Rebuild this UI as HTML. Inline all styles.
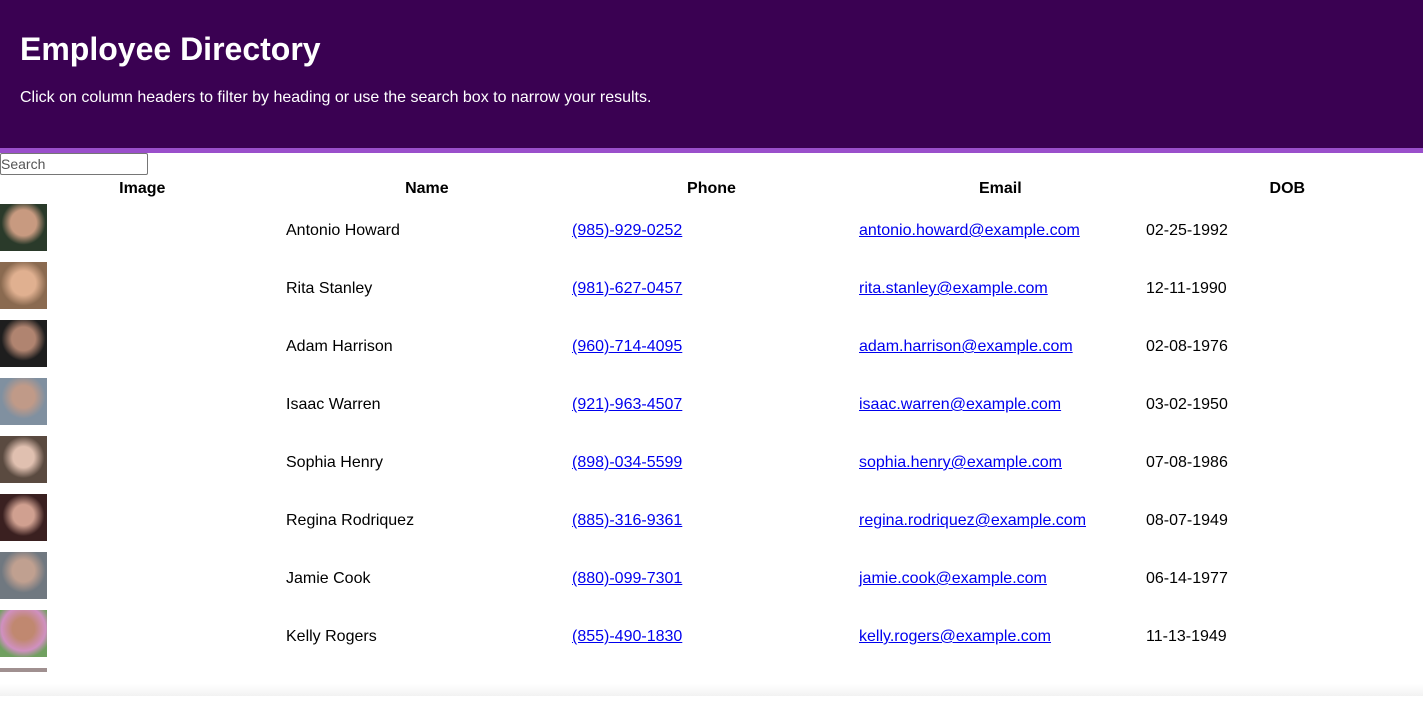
<!DOCTYPE html>
<html><head><meta charset="utf-8"><style>
body{margin:0;font-family:"Liberation Sans",Arial,sans-serif;width:1423px;height:696px;overflow:hidden;position:relative;background:#fff}
.hdr{background:#3a0152;height:148px;border-bottom:5px solid #9a4fcb;color:#fff;box-sizing:content-box}
.hdr h1{margin:0;position:absolute;left:20px;top:31px;font-size:32px;font-weight:bold}
.hdr p{margin:0;position:absolute;left:20px;top:89px;font-size:16px}
input{position:absolute;left:0;top:153px;width:148px;height:22px;box-sizing:border-box;border:1px solid #767676;border-radius:2px;font-size:14px;padding:0;font-family:inherit}
input::placeholder{color:#555}
.th{position:absolute;top:180px;font-weight:bold;font-size:16px;width:284.6px;text-align:center}
.row{position:absolute;left:0;width:1423px;height:58px}
.img{position:absolute;left:0;top:0;width:47px;height:47px}
.c{position:absolute;top:18px;font-size:16px;color:#000}
a.c{color:#0000ee;text-decoration:underline}
.fade{position:absolute;left:0;right:0;top:672px;height:24px;background:linear-gradient(#fff,#fff 12px,#f2f2f2)}
</style></head><body>
<div class="hdr"><h1>Employee Directory</h1><p>Click on column headers to filter by heading or use the search box to narrow your results.</p></div>
<input placeholder="Search">
<div class="th" style="left:0">Image</div>
<div class="th" style="left:284.6px">Name</div>
<div class="th" style="left:569.2px">Phone</div>
<div class="th" style="left:858px">Email</div>
<div class="th" style="left:1145px">DOB</div>

<div class="row" style="top:204px"><div class="img" style="background:radial-gradient(circle at 50% 40%,#c89a80 0 35%,#2a3a2a 60%)"></div><span class="c" style="left:286px">Antonio Howard</span><a href="#" class="c" style="left:572px">(985)-929-0252</a><a href="#" class="c" style="left:859px">antonio.howard@example.com</a><span class="c" style="left:1146px">02-25-1992</span></div>
<div class="row" style="top:262px"><div class="img" style="background:radial-gradient(circle at 50% 45%,#e0b090 0 35%,#8a6a50 65%)"></div><span class="c" style="left:286px">Rita Stanley</span><a href="#" class="c" style="left:572px">(981)-627-0457</a><a href="#" class="c" style="left:859px">rita.stanley@example.com</a><span class="c" style="left:1146px">12-11-1990</span></div>
<div class="row" style="top:320px"><div class="img" style="background:radial-gradient(circle at 50% 40%,#b08470 0 32%,#1e1e1e 60%)"></div><span class="c" style="left:286px">Adam Harrison</span><a href="#" class="c" style="left:572px">(960)-714-4095</a><a href="#" class="c" style="left:859px">adam.harrison@example.com</a><span class="c" style="left:1146px">02-08-1976</span></div>
<div class="row" style="top:378px"><div class="img" style="background:radial-gradient(circle at 50% 40%,#c09a88 0 30%,#8090a0 60%)"></div><span class="c" style="left:286px">Isaac Warren</span><a href="#" class="c" style="left:572px">(921)-963-4507</a><a href="#" class="c" style="left:859px">isaac.warren@example.com</a><span class="c" style="left:1146px">03-02-1950</span></div>
<div class="row" style="top:436px"><div class="img" style="background:radial-gradient(circle at 50% 45%,#e0c0b0 0 30%,#5a4a40 60%)"></div><span class="c" style="left:286px">Sophia Henry</span><a href="#" class="c" style="left:572px">(898)-034-5599</a><a href="#" class="c" style="left:859px">sophia.henry@example.com</a><span class="c" style="left:1146px">07-08-1986</span></div>
<div class="row" style="top:494px"><div class="img" style="background:radial-gradient(circle at 50% 45%,#d0a090 0 30%,#3a2020 60%)"></div><span class="c" style="left:286px">Regina Rodriquez</span><a href="#" class="c" style="left:572px">(885)-316-9361</a><a href="#" class="c" style="left:859px">regina.rodriquez@example.com</a><span class="c" style="left:1146px">08-07-1949</span></div>
<div class="row" style="top:552px"><div class="img" style="background:radial-gradient(circle at 50% 40%,#c0a090 0 30%,#707880 60%)"></div><span class="c" style="left:286px">Jamie Cook</span><a href="#" class="c" style="left:572px">(880)-099-7301</a><a href="#" class="c" style="left:859px">jamie.cook@example.com</a><span class="c" style="left:1146px">06-14-1977</span></div>
<div class="row" style="top:610px"><div class="img" style="background:radial-gradient(circle at 50% 40%,#c08870 0 30%,#d090c0 60%,#70a060 80%)"></div><span class="c" style="left:286px">Kelly Rogers</span><a href="#" class="c" style="left:572px">(855)-490-1830</a><a href="#" class="c" style="left:859px">kelly.rogers@example.com</a><span class="c" style="left:1146px">11-13-1949</span></div>
<div class="row" style="top:668px"><div class="img" style="height:4px;background:#a09090"></div></div>
<div class="fade"></div>
</body></html>
